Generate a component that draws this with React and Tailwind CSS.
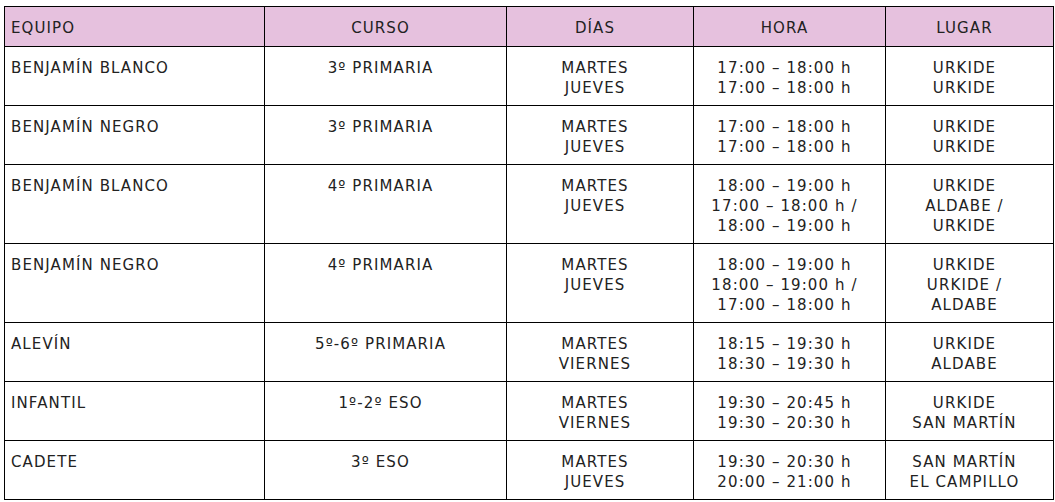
export default function App() {
  const rows = [
    ["BENJAMÍN BLANCO", "3º PRIMARIA", ["MARTES", "JUEVES"], ["17:00 – 18:00 h", "17:00 – 18:00 h"], ["URKIDE", "URKIDE"]],
    ["BENJAMÍN NEGRO", "3º PRIMARIA", ["MARTES", "JUEVES"], ["17:00 – 18:00 h", "17:00 – 18:00 h"], ["URKIDE", "URKIDE"]],
    ["BENJAMÍN BLANCO", "4º PRIMARIA", ["MARTES", "JUEVES"], ["18:00 – 19:00 h", "17:00 – 18:00 h /", "18:00 – 19:00 h"], ["URKIDE", "ALDABE /", "URKIDE"]],
    ["BENJAMÍN NEGRO", "4º PRIMARIA", ["MARTES", "JUEVES"], ["18:00 – 19:00 h", "18:00 – 19:00 h /", "17:00 – 18:00 h"], ["URKIDE", "URKIDE /", "ALDABE"]],
    ["ALEVÍN", "5º-6º PRIMARIA", ["MARTES", "VIERNES"], ["18:15 – 19:30 h", "18:30 – 19:30 h"], ["URKIDE", "ALDABE"]],
    ["INFANTIL", "1º-2º ESO", ["MARTES", "VIERNES"], ["19:30 – 20:45 h", "19:30 – 20:30 h"], ["URKIDE", "SAN MARTÍN"]],
    ["CADETE", "3º ESO", ["MARTES", "JUEVES"], ["19:30 – 20:30 h", "20:00 – 21:00 h"], ["SAN MARTÍN", "EL CAMPILLO"]],
  ];
  const Lines = ({ items }) => items.map((t, i) => <div key={i}>{t}</div>);
  const td = "border border-black align-top pt-[11px] pb-[7px] pr-[10px] text-center";
  const th = "border border-black align-top pt-[11px] pb-[8px] pr-[10px] font-normal text-center";
  return (
    <div className="bg-white w-[1055px] h-[502px] pt-[6px] pl-[4px] text-[#222222]" style={{ fontFamily: '"DejaVu Sans", Verdana, sans-serif' }}>
      <table className="border-collapse table-fixed w-[1049px] text-[15px] leading-[20px] tracking-[1.1px]">
        <colgroup>
          <col className="w-[260px]" />
          <col className="w-[242px]" />
          <col className="w-[187px]" />
          <col className="w-[192px]" />
          <col className="w-[168px]" />
        </colgroup>
        <thead>
          <tr className="bg-[#e6c1de]">
            <th className={th + " !text-left pl-[6px]"}>EQUIPO</th>
            <th className={th}>CURSO</th>
            <th className={th}>DÍAS</th>
            <th className={th}>HORA</th>
            <th className={th}>LUGAR</th>
          </tr>
        </thead>
        <tbody>
          {rows.map((r, i) => (
            <tr key={i}>
              <td className={td + " !text-left pl-[6px]"}>{r[0]}</td>
              <td className={td}>{r[1]}</td>
              <td className={td}><Lines items={r[2]} /></td>
              <td className={td}><Lines items={r[3]} /></td>
              <td className={td}><Lines items={r[4]} /></td>
            </tr>
          ))}
        </tbody>
      </table>
    </div>
  );
}
